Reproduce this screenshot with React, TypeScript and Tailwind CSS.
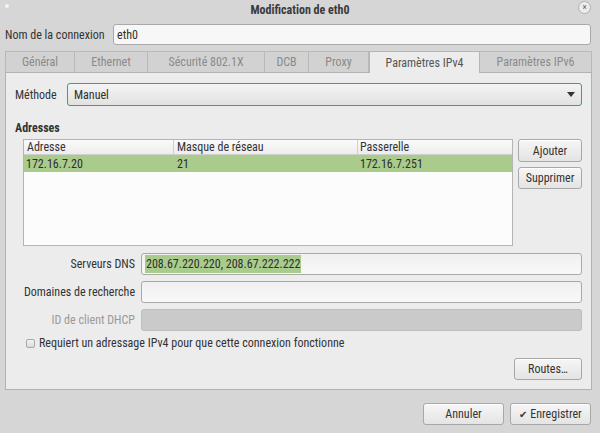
const font = { fontFamily: '"Roboto Condensed", "Liberation Sans", sans-serif' };

function Button({ children, className = '' }: { children: React.ReactNode; className?: string }) {
  return (
    <div
      className={
        'flex items-center justify-center rounded-[3px] border border-[#a8a8a8] bg-gradient-to-b from-[#f6f6f6] to-[#e4e4e4] text-[12px] text-[#333] shadow-[inset_0_1px_0_#ffffff] ' +
        className
      }
    >
      {children}
    </div>
  );
}

function Field({ children, className = '' }: { children?: React.ReactNode; className?: string }) {
  return (
    <div
      className={
        'flex items-center rounded-[3px] border border-[#a9a9a9] bg-gradient-to-b from-[#f0f0f0] to-[#f8f8f8] px-[3px] text-[12px] text-[#2e2e2e] ' +
        className
      }
    >
      {children}
    </div>
  );
}

const tabs: [string, number, boolean][] = [
  ['Général', 70, false],
  ['Ethernet', 73, false],
  ['Sécurité 802.1X', 117, false],
  ['DCB', 44, false],
  ['Proxy', 60, false],
  ['Paramètres IPv4', 111, true],
  ['Paramètres IPv6', 112, false],
];

export default function App() {
  return (
    <div className="flex h-[433px] w-[600px] flex-col bg-[#d6d6d6] text-[12px] text-[#333]" style={font}>
      {/* title bar */}
      <div className="relative flex h-[20px] items-center justify-center">
        <div className="absolute left-[5px] top-[4px] h-[4px] w-[4px] rounded-full bg-[#f4f4f4]" />
        <span className="text-[12px] font-bold text-[#3a3a3a]">Modification de eth0</span>
        <div className="absolute right-[9px] top-[1px] flex h-[13px] w-[13px] items-center justify-center rounded-full border border-[#b0b0b0] bg-[#ececec] text-[9px] leading-none text-[#555]">
          ×
        </div>
      </div>

      {/* name row */}
      <div className="mt-[4px] flex h-[21px] items-center pl-[5px] pr-[9px]">
        <span className="w-[108px] text-[#333]">Nom de la connexion</span>
        <Field className="h-[21px] flex-1 bg-none bg-[#f7f7f7]">eth0</Field>
      </div>

      {/* notebook */}
      <div className="ml-[5px] mt-[6px] w-[587px]">
        <div className="flex h-[21px] items-end">
          {tabs.map(([label, w, active]) =>
            active ? (
              <div
                key={label}
                className="relative z-10 -mb-px flex h-[22px] items-center justify-center border border-b-0 border-[#b6b6b6] bg-[#ececec] text-[#555]"
                style={{ width: w }}
              >
                {label}
              </div>
            ) : (
              <div
                key={label}
                className="flex h-[21px] items-center justify-center border border-b-0 border-l-0 border-[#b9b9b9] bg-[#d2d2d2] text-[#8a8a8a] first:border-l"
                style={{ width: w }}
              >
                {label}
              </div>
            )
          )}
        </div>
        <div className="flex h-[318px] flex-col border border-[#b2b2b2] bg-[#ececec] pl-[9px] pr-[9px] pt-[10px]">
          {/* méthode */}
          <div className="flex h-[23px] items-center">
            <span className="w-[52px]">Méthode</span>
            <div className="flex h-[23px] flex-1 items-center justify-between rounded-[3px] border border-[#2eaa6c] bg-gradient-to-b from-[#f4f4f4] to-[#e2e2e2] pl-[6px] pr-[6px] text-[#2e2e2e]">
              <span>Manuel</span>
              <svg width="8" height="5" viewBox="0 0 8 5">
                <path d="M0 0 L8 0 L4 5 Z" fill="#333" />
              </svg>
            </div>
          </div>

          <div className="mt-[15px] h-[14px] font-bold leading-[14px] text-[#333]">Adresses</div>

          {/* table + buttons */}
          <div className="mt-[4px] flex pl-[8px]">
            <div className="h-[107px] w-[490px] border border-[#b4b4b4] bg-[#fcfcfc]">
              <div className="flex h-[15px] border-b border-[#cfcfcf] bg-gradient-to-b from-[#fafafa] to-[#ededed] text-[#333]">
                <div className="w-[150px] border-r border-[#cfcfcf] pl-[3px] leading-[14px]">Adresse</div>
                <div className="w-[184px] border-r border-[#cfcfcf] pl-[3px] leading-[14px]">Masque de réseau</div>
                <div className="flex-1 pl-[2px] leading-[14px]">Passerelle</div>
              </div>
              <div className="flex h-[17px] items-center bg-[#a9cc8d] text-[#2e2e2e]">
                <div className="w-[150px] pl-[2px]">172.16.7.20</div>
                <div className="w-[184px] pl-[3px]">21</div>
                <div className="flex-1 pl-[2px]">172.16.7.251</div>
              </div>
            </div>
            <div className="ml-[5px] flex flex-1 flex-col gap-[5px]">
              <Button className="h-[23px]">Ajouter</Button>
              <Button className="h-[22px]">Supprimer</Button>
            </div>
          </div>

          {/* form rows */}
          <div className="mt-[7px] flex flex-col gap-[6px] pl-[8px]">
            <div className="flex h-[22px] items-center">
              <span className="w-[113px] pr-[1px] text-right">Serveurs DNS</span>
              <Field className="ml-[5px] h-[22px] flex-1">
                <span className="bg-[#a9cc8d] px-px">208.67.220.220, 208.67.222.222</span>
              </Field>
            </div>
            <div className="flex h-[22px] items-center">
              <span className="w-[113px] pr-[1px] text-right">Domaines de recherche</span>
              <Field className="ml-[5px] h-[22px] flex-1" />
            </div>
            <div className="flex h-[22px] items-center">
              <span className="w-[113px] pr-[1px] text-right text-[#9a9a9a]">ID de client DHCP</span>
              <div className="ml-[5px] h-[22px] flex-1 rounded-[3px] border border-[#bdbdbd] bg-[#cacaca]" />
            </div>
          </div>

          <div className="mt-[5px] flex h-[14px] items-center pl-[11px]">
            <div className="h-[9px] w-[9px] rounded-[2px] border border-[#a8a8a8] bg-gradient-to-b from-[#f2f2f2] to-[#dcdcdc]" />
            <span className="ml-[4px]">Requiert un adressage IPv4 pour que cette connexion fonctionne</span>
          </div>

          <div className="mt-[8px] flex justify-end">
            <Button className="h-[22px] w-[68px]">Routes…</Button>
          </div>
        </div>
      </div>

      {/* bottom buttons */}
      <div className="mt-[13px] flex justify-end gap-[6px] pr-[9px]">
        <Button className="h-[22px] w-[81px]">Annuler</Button>
        <Button className="h-[22px] w-[81px]">
          <span className="mr-[3px] text-[10px]">✔</span>Enregistrer
        </Button>
      </div>
    </div>
  );
}
